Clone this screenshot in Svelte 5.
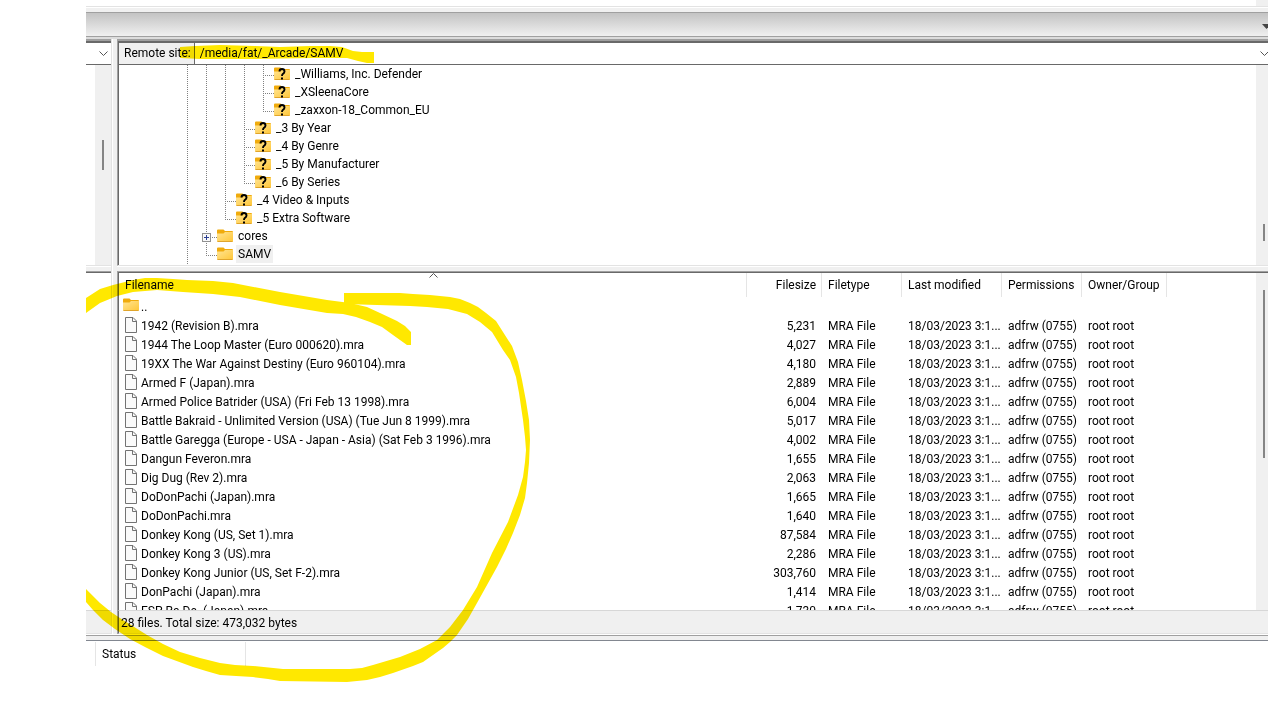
<script>
    const tree = [
        { name: '_Williams, Inc. Defender', guides: ['line', 'line', 'line', 'line', 'tee'], unknown: true },
        { name: '_XSleenaCore', guides: ['line', 'line', 'line', 'line', 'tee'], unknown: true },
        { name: '_zaxxon-18_Common_EU', guides: ['line', 'line', 'line', 'line', 'end'], unknown: true },
        { name: '_3 By Year', guides: ['line', 'line', 'line', 'tee'], unknown: true },
        { name: '_4 By Genre', guides: ['line', 'line', 'line', 'tee'], unknown: true },
        { name: '_5 By Manufacturer', guides: ['line', 'line', 'line', 'tee'], unknown: true },
        { name: '_6 By Series', guides: ['line', 'line', 'line', 'end'], unknown: true },
        { name: '_4 Video & Inputs', guides: ['line', 'line', 'tee'], unknown: true },
        { name: '_5 Extra Software', guides: ['line', 'line', 'end'], unknown: true },
        { name: 'cores', guides: ['line', 'tee'], expandable: true },
        { name: 'SAMV', guides: ['line', 'end'], selected: true },
        { name: '', guides: ['line'] }
    ];

    const files = [
        ['1942 (Revision B).mra', '5,231'],
        ['1944 The Loop Master (Euro 000620).mra', '4,027'],
        ['19XX The War Against Destiny (Euro 960104).mra', '4,180'],
        ['Armed F (Japan).mra', '2,889'],
        ['Armed Police Batrider (USA) (Fri Feb 13 1998).mra', '6,004'],
        ['Battle Bakraid - Unlimited Version (USA) (Tue Jun 8 1999).mra', '5,017'],
        ['Battle Garegga (Europe - USA - Japan - Asia) (Sat Feb 3 1996).mra', '4,002'],
        ['Dangun Feveron.mra', '1,655'],
        ['Dig Dug (Rev 2).mra', '2,063'],
        ['DoDonPachi (Japan).mra', '1,665'],
        ['DoDonPachi.mra', '1,640'],
        ['Donkey Kong (US, Set 1).mra', '87,584'],
        ['Donkey Kong 3 (US).mra', '2,286'],
        ['Donkey Kong Junior (US, Set F-2).mra', '303,760'],
        ['DonPachi (Japan).mra', '1,414'],
        ['ESP Ra.De. (Japan).mra', '1,730']
    ];

    let path = '/media/fat/_Arcade/SAMV';
</script>

{#snippet folder(unknown)}
    <svg class="folder" width="16" height="14" viewBox="0 0 16 14" aria-hidden="true">
        <path d="M0 1.500Q0 .5 1 .5H6.500L8 2H15Q16 2 16 3V6H0Z" fill="#f0ab0c" />
        <path d="M0 4.500H6.500L8 3H16V12Q16 13 15 13H1Q0 13 0 12Z" fill="url(#folder-face)" />
        <path d="M.5 12.500H15.500" stroke="#e0a52c" />
        {#if unknown}
            <path d="M5.500 4.500Q5.500 2 8 2T10.500 4.500Q10.500 6 9 6.800Q8 7.500 8 9" fill="none" stroke="#000" stroke-width="1.900" />
            <path d="M7 10.500H9V12.500H7Z" fill="#000" />
        {/if}
    </svg>
{/snippet}

{#snippet chevron()}
    <svg width="9" height="6" viewBox="0 0 9 6" aria-hidden="true">
        <path d="M.5 .5L4.500 4.500L8.500 .5" fill="none" stroke="#555" />
    </svg>
{/snippet}

<svg class="defs" width="0" height="0" aria-hidden="true">
    <linearGradient id="folder-face" x1="0" y1="0" x2="1" y2="1">
        <stop offset="0" stop-color="#ffe493" />
        <stop offset="1" stop-color="#ffc636" />
    </linearGradient>
</svg>

<main class="window">
    <div class="log"><div class="track"></div></div>
    <div class="rebar"></div>
    <div class="toolbar">
        <svg width="6" height="5" viewBox="0 0 6 5" aria-hidden="true"><path d="M0 0H9L4.500 5Z" fill="#444" /></svg>
    </div>

    <div class="panes">
        <section class="local">
            <div class="top">
                <div class="address"><button class="drop" aria-label="Local sites">{@render chevron()}</button></div>
                <div class="tree-body">
                    <div class="track"><div class="thumb"></div></div>
                </div>
            </div>
            <div class="split"></div>
            <div class="bottom">
                <div class="list"></div>
                <div class="status"></div>
            </div>
        </section>

        <div class="divider"></div>

        <section class="remote">
            <div class="top">
                <div class="address">
                    <label for="remote-path">Remote site:</label>
                    <input id="remote-path" type="text" bind:value={path} spellcheck="false" />
                    <button class="drop" aria-label="Recent paths">{@render chevron()}</button>
                </div>
                <div class="tree-body">
                    <ul class="tree">
                        {#each tree as node}
                            <li>
                                {#each node.guides as guide}
                                    <span class="guide {guide}">
                                        {#if node.expandable && guide === 'tee'}
                                            <button class="expand" aria-label="Expand {node.name}">
                                                <svg width="9" height="9" viewBox="0 0 9 9" aria-hidden="true">
                                                    <rect x=".5" y=".5" width="8" height="8" fill="#f8f8f8" stroke="#919191" />
                                                    <path d="M2 4.500H7M4.500 2V7" stroke="#2b3f92" />
                                                </svg>
                                            </button>
                                        {/if}
                                    </span>
                                {/each}
                                {#if node.name}
                                    {@render folder(node.unknown)}
                                    <span class="name" class:selected={node.selected}>{node.name}</span>
                                {/if}
                            </li>
                        {/each}
                    </ul>
                    <div class="track"><div class="thumb"></div></div>
                </div>
            </div>
            <div class="split"></div>
            <div class="bottom">
                <div class="list">
                    <div class="scroller">
                        <table>
                            <colgroup>
                                <col />
                                <col class="size" />
                                <col class="type" />
                                <col class="modified" />
                                <col class="permissions" />
                                <col class="owner" />
                                <col class="rest" />
                            </colgroup>
                            <thead>
                                <tr>
                                    <th>
                                        Filename
                                        <svg class="sort" width="9" height="5" viewBox="0 0 9 5" aria-hidden="true">
                                            <path d="M.5 4.500L4.500 .5L8.500 4.500" fill="none" stroke="#555" />
                                        </svg>
                                    </th>
                                    <th class="number">Filesize</th>
                                    <th>Filetype</th>
                                    <th>Last modified</th>
                                    <th>Permissions</th>
                                    <th>Owner/Group</th>
                                    <td></td>
                                </tr>
                            </thead>
                            <tbody>
                                <tr>
                                    <td class="name-cell parent"><div class="file">{@render folder(false)}..</div></td>
                                    <td colspan="6"></td>
                                </tr>
                                {#each files as [name, size]}
                                    <tr>
                                        <td class="name-cell">
                                            <div class="file">
                                                <svg width="12" height="16" viewBox="0 0 12 16" aria-hidden="true">
                                                    <path d="M.5 .5H8L11.500 4V15.500H.5Z" fill="#fafafa" stroke="#737373" />
                                                    <path d="M7.500 .5V4.500H11.500" fill="none" stroke="#737373" />
                                                </svg>
                                                {name}
                                            </div>
                                        </td>
                                        <td class="number">{size}</td>
                                        <td>MRA File</td>
                                        <td>18/03/2023 3:1...</td>
                                        <td>adfrw (0755)</td>
                                        <td>root root</td>
                                        <td></td>
                                    </tr>
                                {/each}
                            </tbody>
                        </table>
                    </div>
                    <div class="track"><div class="thumb"></div></div>
                </div>
                <div class="status">28 files. Total size: 473,032 bytes</div>
            </div>
        </section>
    </div>

    <div class="queue">
        <div class="queue-header">
            <span></span>
            <span>Status</span>
        </div>
    </div>

    <!-- highlighter marks -->
    <svg class="marks" width="1182" height="711" viewBox="86 0 1182 711" aria-hidden="true">
        <path d="M180 47L195 46L220 45L255 46L280 47L310 46L330 46L342 47L353 51L362 52L374 52V63L367 63L358 61L347 58L313 58L253 59L200 59L180 58Z" />
        <path d="M86 298L100 289L113 285L133 280L145 278L157 278L173 279L187 280L213 281L233 283L280 292L327 300L350 303L367 307L380 313L397 321L405 326L411 332V345H407L393 335L382 327L370 322L356 317L343 314L327 313L280 305L240 297L213 294L183 292L157 290L133 292L117 296L100 303L86 313Z" />
        <path d="M344 293L400 293L413 294L430 295L450 297L460 299L470 303L478 307L486 313L496 321L503 332L512 346L518 362L522 380L526 401L529 420L530 440L529 463L527 483L525 498L520 515L513 533L506 549L497 567L477 603L468 619L457 635L450 642L443 648L423 662L413 666L393 673L380 677L367 680L347 682L280 681L268 679L253 677L236 676L220 675L206 671L193 667L163 656L145 647L130 639L115 629L103 620L93 610L86 602V589L100 603L111 612L123 620L147 635L163 644L180 652L200 658L220 663L235 665L253 666L283 669L350 669L362 668L373 665L400 657L420 649L437 640L450 627L463 610L477 587L492 553L508 522L518 495L523 477L525 462L526 450L525 437L523 420L519 393L516 377L510 360L503 350L492 332L480 322L467 314L448 309L427 307L410 306L344 304Z" />
    </svg>
</main>

<style>
    :global(body) {
        margin: 0;
        background: #fff;
    }

    .window {
        position: relative;
        display: flex;
        flex-direction: column;
        box-sizing: border-box;
        height: 100vh;
        padding-left: 86px;
        overflow: hidden;
        color: #000;
        font-family: Roboto, 'Open Sans', sans-serif;
        font-size: 12px;
        line-height: 18px;
    }

    .defs {
        position: absolute;
    }

    svg {
        flex: none;
        display: block;
    }

    button {
        padding: 0;
        border: 0;
        background: none;
    }

    .track {
        flex: none;
        width: 12px;
        background: #f0f0f0;
    }

    .thumb {
        width: 2px;
        margin-left: 7px;
        background: #858585;
    }

    .log {
        display: flex;
        justify-content: flex-end;
        height: 6px;
        border-bottom: 1px solid #e3e3e3;
    }

    .rebar {
        height: 4px;
        margin-top: 1px;
        background: #f0f0f0;
    }

    .toolbar {
        display: flex;
        align-items: center;
        justify-content: flex-end;
        box-sizing: border-box;
        height: 25px;
        padding-top: 4px;
        border-top: 1px solid #a0a0a0;
        border-bottom: 1px solid #a0a0a0;
        background: linear-gradient(#c3c3c3, #f0f0f0);
    }

    .panes {
        flex: 1;
        display: flex;
        min-height: 0;
        border-top: 2px solid #dcdcdc;
    }

    .local,
    .remote {
        display: flex;
        flex-direction: column;
    }

    .local {
        flex: none;
        width: 25px;
        border-right: 1px solid #e3e3e3;
    }

    .divider {
        flex: none;
        width: 4px;
        margin-left: 1px;
        background: #f0f0f0;
    }

    .remote {
        flex: 1;
        min-width: 0;
    }

    .top {
        border-top: 2px solid #a0a0a0;
        border-bottom: 1px solid #e3e3e3;
    }

    .address {
        display: flex;
        height: 21px;
        border-top: 2px solid #696969;
        border-bottom: 1px solid #696969;
    }

    .tree-body {
        display: flex;
        justify-content: space-between;
        height: 200px;
        overflow: hidden;
    }

    .split {
        flex: none;
        height: 4px;
        margin-top: 1px;
        background: #f0f0f0;
    }

    .bottom {
        flex: 1;
        display: flex;
        flex-direction: column;
        min-height: 0;
        border-top: 1px solid #a0a0a0;
    }

    .list {
        flex: 1;
        display: flex;
        min-height: 0;
        border-top: 1px solid #696969;
    }

    .status {
        flex: none;
        height: 22px;
        padding-left: 2px;
        border-top: 1px solid #d7d7d7;
        border-bottom: 1px solid #e3e3e3;
        background: #f0f0f0;
        line-height: 24px;
    }

    .local .address {
        justify-content: flex-end;
        padding-right: 3px;
    }

    .local .track {
        width: 16px;
        margin-left: auto;
    }

    .local .thumb {
        height: 30px;
        margin-top: 75px;
    }

    .remote .top,
    .remote .bottom {
        border-left: 1px solid #a0a0a0;
    }

    .remote .address,
    .remote .tree-body,
    .remote .list,
    .remote .status {
        border-left: 1px solid #696969;
    }

    .address label {
        padding: 0 3px 0 5px;
        border-right: 1px solid #696969;
        background: #f0f0f0;
        line-height: 20px;
    }

    .address input {
        flex: 1;
        min-width: 0;
        padding: 0 5px 2px;
        border: 0;
        outline: 0;
        background: #fff;
        color: inherit;
        font: inherit;
    }

    .remote .drop {
        width: 8px;
        overflow: hidden;
    }

    .tree {
        margin: 0;
        padding: 0 0 0 68px;
        list-style: none;
    }

    .tree li {
        display: flex;
        align-items: center;
        height: 18px;
    }

    .guide {
        display: flex;
        align-items: center;
        width: 19px;
        height: 18px;
        background: repeating-linear-gradient(#808080 0 1px, transparent 1px 2px) 0 0 / 1px 100% no-repeat;
    }

    .tee,
    .end {
        width: 11px;
        background:
            repeating-linear-gradient(#808080 0 1px, transparent 1px 2px) 0 0 / 1px 100% no-repeat,
            repeating-linear-gradient(90deg, #808080 0 1px, transparent 1px 2px) 0 10px / 100% 1px no-repeat;
    }

    .end {
        background-size: 1px 10px, 100% 1px;
    }

    .expand {
        margin: 2px 0 0 -4px;
    }

    .name {
        margin-left: 3px;
        padding: 0 2px;
    }

    .selected {
        background: #f0f0f0;
    }

    .remote .tree-body .thumb {
        height: 17px;
        margin-top: 159px;
    }

    .scroller {
        flex: 1;
        min-width: 0;
        overflow: hidden;
    }

    .remote .list .thumb {
        height: 168px;
        margin-top: 17px;
    }

    table {
        width: 100%;
        border-collapse: separate;
        border-spacing: 0;
        table-layout: fixed;
    }

    .size {
        width: 75px;
    }

    .type {
        width: 80px;
    }

    .modified {
        width: 100px;
    }

    .permissions {
        width: 80px;
    }

    .owner {
        width: 85px;
    }

    .rest {
        width: 89px;
    }

    th,
    td {
        box-sizing: border-box;
        height: 19px;
        padding: 2px 0 0 6px;
        line-height: 17px;
        font-weight: 400;
        text-align: left;
        white-space: nowrap;
    }

    th {
        position: relative;
        height: 24px;
        padding-top: 0;
        border-right: 1px solid #e5e5e5;
    }

    .number {
        padding-right: 6px;
        text-align: right;
    }

    th.number {
        padding-right: 5px;
    }

    .sort {
        position: absolute;
        top: 0;
        left: 50%;
        margin-left: -4px;
    }

    .name-cell {
        padding-top: 1px;
    }

    .file {
        display: flex;
        align-items: flex-start;
        gap: 4px;
        height: 18px;
        line-height: 19px;
    }

    .parent {
        padding-left: 4px;
    }

    .parent .file {
        gap: 2px;
    }

    .queue {
        flex: none;
        height: 75px;
        margin-top: 1px;
        border-top: 1px solid #a0a0a0;
        background: linear-gradient(#f0f0f0 0 4px, #fff 4px);
    }

    .queue-header {
        display: flex;
        border-top: 1px solid #828790;
        margin-top: 4px;
        padding-top: 1px;
        line-height: 24px;
    }

    .queue-header span {
        width: 143px;
        height: 24px;
        padding-left: 6px;
        border-right: 1px solid #e5e5e5;
    }

    .queue-header span:first-child {
        width: 9px;
        padding-left: 0;
    }

    .marks {
        position: absolute;
        top: 0;
        left: 86px;
        fill: #ffe800;
        mix-blend-mode: multiply;
        pointer-events: none;
    }
</style>
